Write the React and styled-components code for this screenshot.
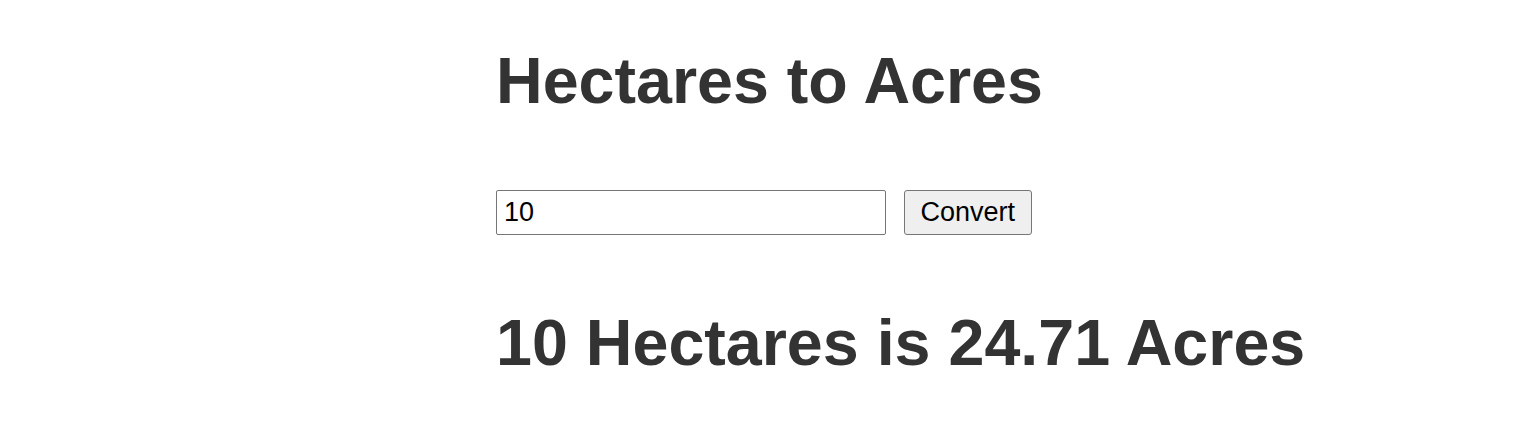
import React, { useState } from "react";
import styled, { createGlobalStyle } from "styled-components";

const GlobalStyle = createGlobalStyle`
  body {
    margin: 0;
    background: #fff;
    font-family: "Liberation Sans", Arial, sans-serif;
  }
`;

const Page = styled.div`
  display: flex;
  justify-content: center;
  padding-top: 44px;
`;

const Column = styled.main`
  width: 538px;
`;

const Title = styled.h1`
  margin: 0;
  font-size: 64.6px;
  font-weight: 700;
  line-height: normal;
  color: #333;
  white-space: nowrap;
`;

const ConvertForm = styled.form`
  display: flex;
  align-items: center;
  gap: 18px;
  margin-top: 72px;
`;

const NumberInput = styled.input`
  box-sizing: border-box;
  width: 390px;
  height: 45px;
  padding: 6px 7px;
  font-family: inherit;
  font-size: 27px;
  color: #000;
  background: #fff;
  border: 1px solid #767676;
  border-radius: 2px;
  outline: none;
`;

const ConvertButton = styled.button`
  box-sizing: border-box;
  height: 45px;
  padding: 0 15.5px;
  font-family: inherit;
  font-size: 27px;
  color: #000;
  background: #efefef;
  border: 1px solid #767676;
  border-radius: 3px;
  cursor: pointer;
`;

const Result = styled(Title).attrs({ as: "h2" })`
  margin-top: 71px;
`;

const App = () => {
  const [hectares, setHectares] = useState("10");
  const [result, setResult] = useState({ ha: 10, acres: 24.71 });

  const handleSubmit = (e) => {
    e.preventDefault();
    const ha = parseFloat(hectares) || 0;
    setResult({ ha, acres: Math.round(ha * 2.47105 * 100) / 100 });
  };

  return (
    <>
      <GlobalStyle />
      <Page>
        <Column>
          <Title>Hectares to Acres</Title>
          <ConvertForm onSubmit={handleSubmit}>
            <NumberInput
              type="text"
              value={hectares}
              onChange={(e) => setHectares(e.target.value)}
            />
            <ConvertButton type="submit">Convert</ConvertButton>
          </ConvertForm>
          <Result>
            {result.ha} Hectares is {result.acres} Acres
          </Result>
        </Column>
      </Page>
    </>
  );
};

export default App;
